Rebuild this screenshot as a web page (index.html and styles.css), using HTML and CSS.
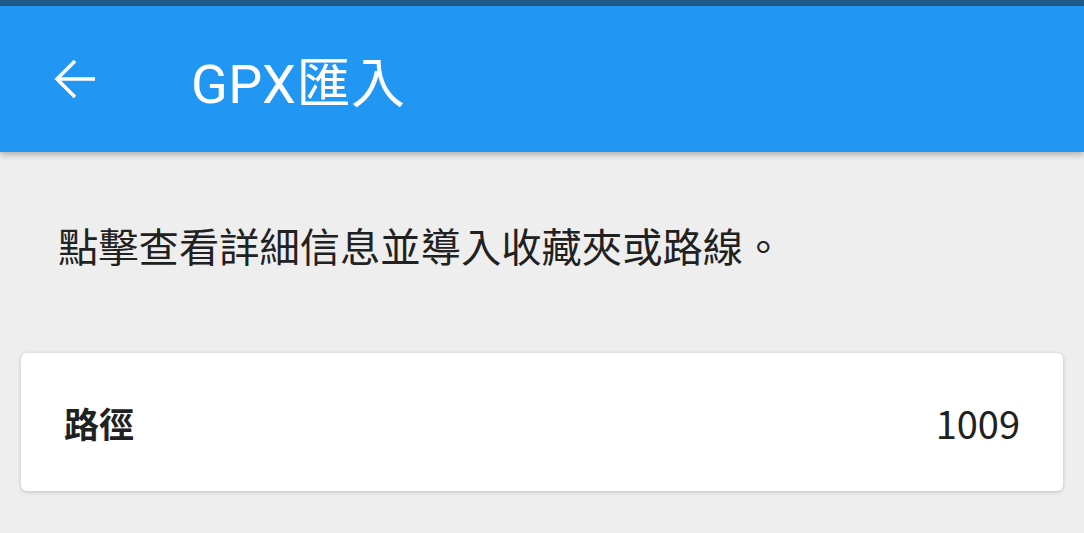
FILE: index.html
```html
<!DOCTYPE html>
<html lang="zh-Hant">
<head>
  <meta charset="UTF-8">
  <meta name="viewport" content="width=device-width, initial-scale=1.0">
  <title>GPX匯入</title>
  <link rel="stylesheet" href="styles.css">
</head>
<body>
  <div class="status-bar"></div>

  <header class="app-bar">
    <button class="back-btn" aria-label="返回">
      <svg viewBox="0 0 42 42" width="42" height="42">
        <path d="M41 21H4 M21 3L3 21l18 18" fill="none" stroke="#fff" stroke-width="3.6"/>
      </svg>
    </button>
    <h1 class="title">GPX匯入</h1>
  </header>

  <main class="content">
    <p class="hint">點擊查看詳細信息並導入收藏夾或路線。</p>

    <div class="card">
      <span class="card-label">路徑</span>
      <span class="card-value">1009</span>
    </div>
  </main>
</body>
</html>
```

FILE: styles.css
```css
* {
  margin: 0;
  padding: 0;
  box-sizing: border-box;
}

body {
  font-family: Roboto, "Noto Sans CJK TC", sans-serif;
  background: #eeeeee;
  color: #212121;
  width: 1084px;
  height: 533px;
  overflow: hidden;
}

.status-bar {
  height: 6px;
  background: #1f5a8a;
}

.app-bar {
  height: 146px;
  background: #2196f3;
  display: flex;
  align-items: center;
  padding-left: 54px;
  box-shadow: 0 3px 6px rgba(0, 0, 0, 0.25);
  position: relative;
}

.back-btn {
  background: none;
  border: none;
  display: flex;
  width: 42px;
  height: 42px;
}

.title {
  margin-left: 95px;
  color: #fff;
  font-size: 54px;
  font-weight: 400;
  letter-spacing: 0.5px;
}

.content {
  padding: 0 21px;
}

.hint {
  font-family: "Noto Sans CJK TC", sans-serif;
  font-size: 40.3px;
  line-height: 60px;
  padding: 63px 0 0 37px;
  height: 201px;
  color: #212121;
}

.card {
  background: #fff;
  border-radius: 6px;
  height: 138px;
  display: flex;
  align-items: center;
  justify-content: space-between;
  padding: 0 43px;
  box-shadow: 0 1px 4px rgba(0, 0, 0, 0.2);
}

.card-label {
  font-family: "Noto Sans CJK TC", sans-serif;
  font-size: 35px;
  font-weight: 700;
}

.card-value {
  font-family: "Noto Sans CJK TC", sans-serif;
  font-size: 38px;
}
```
